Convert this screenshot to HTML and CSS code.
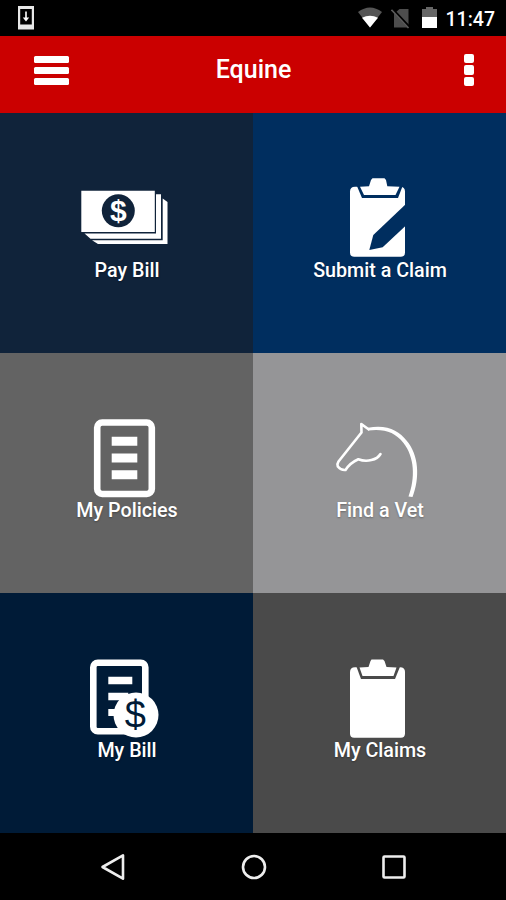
FILE: index.html
```html
<!DOCTYPE html>
<html lang="en">
<head>
    <meta charset="UTF-8">
    <meta name="viewport" content="width=device-width, initial-scale=1.0">
    <title>Equine</title>
    <link rel="stylesheet" href="styles.css">
</head>
<body>
    <div class="status-bar">
        <svg class="status-download" width="16" height="24" viewBox="0 0 16 24">
            <path d="M0 0h16v23.500H0z M2.200 3v15.500h11.600V3z" fill="#e8e8e8" fill-rule="evenodd"/>
            <path d="M7.200 5.500h1.600v6h2.400L8 15.500l-3.200-4h2.400z" fill="#fff"/>
        </svg>
        <div class="status-icons">
            <svg class="status-wifi" width="26" height="21" viewBox="0 0 26 21">
                <path d="M1 5Q13-4 25 5L13 20.500z" fill="#555"/>
                <path d="M5 10.800Q13 6.500 21 10.800L13 20.500z" fill="#fff"/>
            </svg>
            <svg class="status-sim" width="20" height="21" viewBox="0 0 20 21">
                <path d="M8.500 1H17.500V19.500H3V6z" fill="#4d4d4d"/>
                <path d="M1.500 1.500L18.500 19.500" stroke="#000" stroke-width="3"/>
                <path d="M.5 1.800L17.500 20" stroke="#5c5c5c" stroke-width="1.600"/>
            </svg>
            <svg class="status-battery" width="15" height="21" viewBox="0 0 15 21">
                <path d="M4 0h7v2h4v8H0V2h4z" fill="#666"/>
                <path d="M0 10h15v11H0z" fill="#fff"/>
            </svg>
            <span class="status-time">11:47</span>
        </div>
    </div>

    <header class="header">
        <div class="menu-button">
            <span></span>
            <span></span>
            <span></span>
        </div>
        <h1 class="header-title">Equine</h1>
        <div class="more-button">
            <span></span>
            <span></span>
            <span></span>
        </div>
    </header>

    <main class="tile-grid">
        <div class="tile tile-navy">
            <svg class="tile-icon" viewBox="0 0 101 82">
                <path d="M80 18.300H85V62.800H14.500L8.500 57.500H80z" fill="#fff"/>
                <path d="M86.700 22.500L91.500 26V68H22L16 64.300H86.700z" fill="#fff"/>
                <path d="M5.300 14.800h73.500V56H5.300z" fill="#fff"/>
                <circle cx="42.300" cy="34.800" r="16.500" fill="#10233a"/>
                <text class="icon-dollar" x="42.300" y="44.600" font-size="30">$</text>
            </svg>
            <div class="tile-label">Pay Bill</div>
        </div>

        <div class="tile tile-blue">
            <svg class="tile-icon" viewBox="0 0 101 82">
                <path d="M26 10.700H71Q76 10.700 76 15.500V76.500Q76 80.700 71.800 80.700H25.200Q21 80.700 21 76.500V15.500Q21 10.700 26 10.700z" fill="#fff"/>
                <path d="M27.500 9L33 22H69L74 9z" fill="#002e5f"/>
                <path d="M43.500 2.300H55.500L57 4L58.300 10.200L70.500 10.700L66.500 19H35L31 10.700L40 10.200L42 4z" fill="#fff"/>
                <path d="M78 27L44.300 59L40.300 74L53.700 71.300L78 48.500z" fill="#002e5f"/>
            </svg>
            <div class="tile-label">Submit a Claim</div>
        </div>

        <div class="tile tile-gray">
            <svg class="tile-icon" viewBox="0 0 101 82">
                <rect x="21.200" y="6.500" width="54.600" height="71.500" rx="5" fill="none" stroke="#fff" stroke-width="6.600"/>
                <path d="M35.700 20.700h25.600v9H35.700z M35.700 37.500h25.600v9H35.700z M35.700 54.200h25.600v9H35.700z" fill="#fff"/>
            </svg>
            <div class="tile-label">My Policies</div>
        </div>

        <div class="tile tile-silver">
            <svg class="tile-icon" viewBox="0 0 101 82">
                <path d="M51.500 38C48 44 38 46.500 29.300 43.300Q21 47 16.500 54Q12 54.500 8.800 50.500Q7.800 48 9.500 45.500L32.500 16.500L32.300 8L39.500 13.300" fill="none" stroke="#fff" stroke-width="2.600" stroke-linecap="round" stroke-linejoin="round"/>
                <path d="M39 11.800C58 8 70 15 77.500 24.500C90 39 91 62 83.500 81L79.500 80.500C86.500 62 85.500 41 74.500 27C66 16 55 12.500 39 14.500z" fill="#fff"/>
            </svg>
            <div class="tile-label">Find a Vet</div>
        </div>

        <div class="tile tile-midnight">
            <svg class="tile-icon" viewBox="0 0 101 82">
                <rect x="17.300" y="6.800" width="52" height="68.500" rx="4.500" fill="none" stroke="#fff" stroke-width="6.600"/>
                <path d="M32.300 20.700h24v7.500h-24z M32.300 36.700h20v7.500h-20z M32.300 53h12v7h-12z" fill="#fff"/>
                <circle cx="60" cy="59" r="22.500" fill="#fff"/>
                <text class="icon-dollar icon-dollar-dark" x="59.300" y="71.500" font-size="38">$</text>
            </svg>
            <div class="tile-label">My Bill</div>
        </div>

        <div class="tile tile-charcoal">
            <svg class="tile-icon" viewBox="0 0 101 82">
                <path d="M26 11.200H71Q76 11.200 76 16V77.500Q76 81.700 71.800 81.700H25.200Q21 81.700 21 77.500V16Q21 11.200 26 11.200z" fill="#fff"/>
                <path d="M27 9.500L32 23H66L71.500 9.500z" fill="#4a4a4a"/>
                <path d="M42.500 3.500H54L55.500 5L57.500 11L67.500 11.500L64.500 20H33.500L30.500 11.500L39.500 11L41.500 5z" fill="#fff"/>
            </svg>
            <div class="tile-label">My Claims</div>
        </div>
    </main>

    <nav class="nav-bar">
        <svg class="nav-icon" viewBox="0 0 28 28">
            <path d="M24 2.300V25.700L3.500 14z"/>
        </svg>
        <svg class="nav-icon" viewBox="0 0 28 28">
            <circle cx="14" cy="14" r="11"/>
        </svg>
        <svg class="nav-icon" viewBox="0 0 28 28">
            <rect x="3.500" y="3.500" width="21" height="21" rx="1"/>
        </svg>
    </nav>
</body>
</html>
```
FILE: styles.css
```css
* {
    box-sizing: border-box;
}

body {
    margin: 0;
    height: 900px;
    display: flex;
    flex-direction: column;
    background: #000;
    color: #fff;
    font-family: Roboto, "Liberation Sans", sans-serif;
    font-weight: 500;
    overflow: hidden;
}

.status-bar {
    height: 36px;
    flex: none;
    display: flex;
    justify-content: space-between;
    align-items: flex-start;
    padding: 6px 11px 0 18px;
}

.status-icons {
    display: flex;
    align-items: flex-start;
    padding-top: 1px;
}

.status-sim {
    margin: 1px 0 0 8px;
}

.status-battery {
    margin-left: 11px;
}

.status-time {
    margin: 0 0 0 9px;
    font-size: 19.500px;
    line-height: 26px;
}

.header {
    height: 77px;
    flex: none;
    display: grid;
    grid-template-columns: 1fr auto 1fr;
    align-items: center;
    padding: 0 32px 8px 33px;
    background: #cb0000;
}

.menu-button {
    width: 35px;
    margin-left: 1px;
    display: flex;
    flex-direction: column;
    gap: 4.500px;
}

.menu-button span {
    height: 6.500px;
    border-radius: 1.500px;
    background: #fff;
}

.header-title {
    margin: 0 0 2px;
    font-size: 25px;
    line-height: 30px;
    font-weight: 500;
}

.more-button {
    width: 10px;
    margin-bottom: 1px;
    justify-self: end;
    display: flex;
    flex-direction: column;
    gap: 2px;
}

.more-button span {
    height: 9.500px;
    border-radius: 2px;
    background: #fff;
}

.tile-grid {
    flex: none;
    display: grid;
    grid-template-columns: 253px 253px;
    grid-template-rows: repeat(3, 240px);
}

.tile {
    display: flex;
    flex-direction: column;
    align-items: center;
    padding-top: 63px;
}

.tile-navy { background: #10233a; }
.tile-blue { background: #002e5f; }
.tile-gray { background: #636363; }
.tile-silver { background: #959597; }
.tile-midnight { background: #001b37; }
.tile-charcoal { background: #4a4a4a; }

.tile-icon {
    width: 101px;
    height: 82px;
    flex: none;
}

.icon-dollar {
    fill: #fff;
    font-family: "Liberation Sans", sans-serif;
    font-weight: 700;
    text-anchor: middle;
}

.icon-dollar-dark {
    fill: #001b37;
    font-weight: 400;
}

.tile-label {
    padding-left: 1px;
    font-size: 19.700px;
    line-height: 26px;
    white-space: nowrap;
    text-shadow: 0 1px 2px rgba(0, 0, 0, 0.3);
}

.nav-bar {
    flex: 1;
    display: flex;
    justify-content: space-between;
    align-items: center;
    padding: 0 98px 0 99px;
}

.nav-icon {
    width: 28px;
    height: 28px;
    fill: none;
    stroke: #eee;
    stroke-width: 2.600;
    stroke-linejoin: round;
}
```
